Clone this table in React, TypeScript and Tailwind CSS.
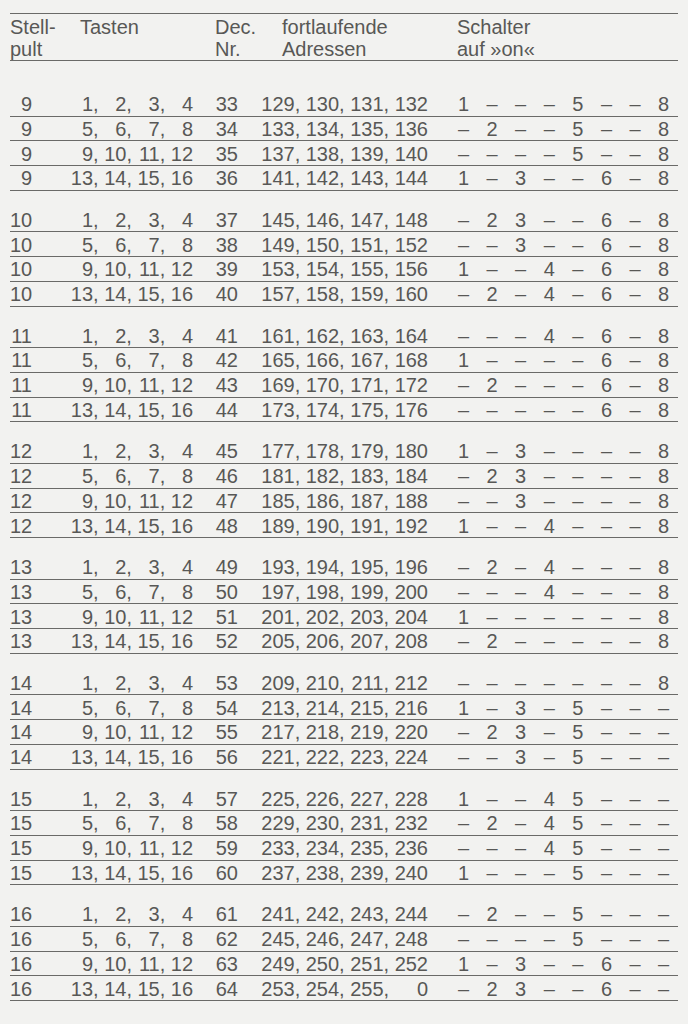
import React from "react";

const tasten = [
  ["1", "2", "3", "4"],
  ["5", "6", "7", "8"],
  ["9", "10", "11", "12"],
  ["13", "14", "15", "16"],
];

// switch settings per Dec. number 33..64, "-" means off
const schalter = [
  "1---5--8", "-2--5--8", "----5--8", "1-3--6-8",
  "-23--6-8", "--3--6-8", "1--4-6-8", "-2-4-6-8",
  "---4-6-8", "1----6-8", "-2---6-8", "-----6-8",
  "1-3----8", "-23----8", "--3----8", "1--4---8",
  "-2-4---8", "---4---8", "1------8", "-2-----8",
  "-------8", "1-3-5---", "-23-5---", "--3-5---",
  "1--45---", "-2-45---", "---45---", "1---5---",
  "-2--5---", "----5---", "1-3--6--", "-23--6--",
];

const groups = [9, 10, 11, 12, 13, 14, 15, 16];

function Row({ pult, idx }: { pult: number; idx: number }) {
  const dec = 33 + (pult - 9) * 4 + idx;
  const addr = [1, 2, 3, 4].map((k) => String((4 * (dec - 1) + k) % 256));
  const sw = schalter[dec - 33];
  return (
    <div className="flex h-[24.7px] items-end border-b-[1.6px] border-[#6a6a68] pb-[1.5px] leading-[20px]">
      <div className="w-[22px] text-right">{pult}</div>
      <div className="flex w-[161px] justify-end gap-[5.56px]">
        {tasten[idx].map((t, i) => (
          <span key={i} className={i < 3 ? "w-[27.8px] text-right" : "w-[22.2px] text-right"}>
            {t}
            {i < 3 ? "," : ""}
          </span>
        ))}
      </div>
      <div className="w-[45px] text-right">{dec}</div>
      <div className="flex w-[190px] justify-end gap-[5.56px]">
        {addr.map((a, i) => (
          <span key={i} className={i < 3 ? "w-[38.9px] text-right" : "w-[33.4px] text-right"}>
            {a}
            {i < 3 ? "," : ""}
          </span>
        ))}
      </div>
      <div className="w-[21.2px]" />
      {sw.split("").map((c, i) => (
        <span key={i} className="w-[28.6px] text-center">
          {c === "-" ? "–" : c}
        </span>
      ))}
    </div>
  );
}

export default function App() {
  return (
    <div
      className="min-h-screen w-full bg-[#f2f2f0] pt-[13px] text-[20px] text-[#585856]"
      style={{ fontFamily: '"Liberation Sans", Arial, sans-serif' }}
    >
      <div className="ml-[10px] w-[668px]">
        <div className="flex border-y-[1.6px] border-[#6a6a68] pt-[2px] leading-[22px]">
          <div className="w-[70px]">
            Stell-
            <br />
            pult
          </div>
          <div className="w-[135px]">Tasten</div>
          <div className="w-[67px]">
            Dec.
            <br />
            Nr.
          </div>
          <div className="w-[175px]">
            fortlaufende
            <br />
            Adressen
          </div>
          <div>
            Schalter
            <br />
            auf »on«
          </div>
        </div>
        <div className="flex flex-col gap-[17px] pt-[31px]">
          {groups.map((g) => (
            <div key={g} className="flex flex-col">
              {[0, 1, 2, 3].map((i) => (
                <Row key={i} pult={g} idx={i} />
              ))}
            </div>
          ))}
        </div>
      </div>
    </div>
  );
}
